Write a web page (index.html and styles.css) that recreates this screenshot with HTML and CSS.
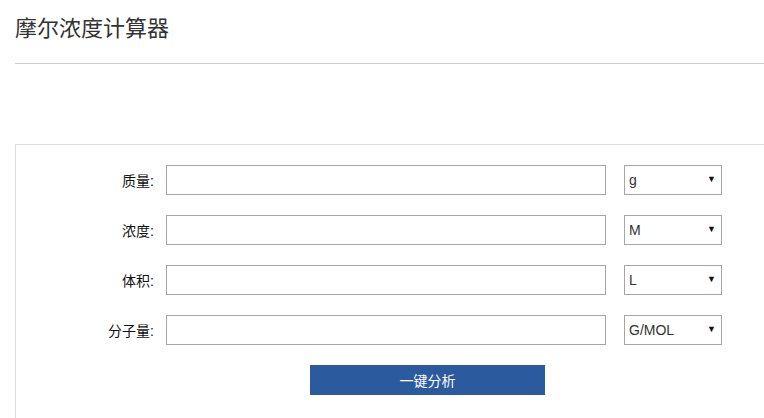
FILE: index.html
```html
<!DOCTYPE html>
<html lang="zh-CN">
<head>
    <meta charset="UTF-8">
    <meta name="viewport" content="width=device-width, initial-scale=1.0">
    <title>摩尔浓度计算器</title>
    <link rel="stylesheet" href="styles.css">
</head>
<body>
    <div class="page">
        <div class="header">
            <h2>摩尔浓度计算器</h2>
        </div>

        <div class="panel">
            <div class="row">
                <label class="label" for="mass">质量:</label>
                <input class="field" id="mass" type="text">
                <div class="unit">
                    <select>
                        <option>g</option>
                        <option>mg</option>
                        <option>kg</option>
                    </select>
                </div>
            </div>
            <div class="row">
                <label class="label" for="conc">浓度:</label>
                <input class="field" id="conc" type="text">
                <div class="unit">
                    <select>
                        <option>M</option>
                        <option>mM</option>
                    </select>
                </div>
            </div>
            <div class="row">
                <label class="label" for="vol">体积:</label>
                <input class="field" id="vol" type="text">
                <div class="unit">
                    <select>
                        <option>L</option>
                        <option>mL</option>
                    </select>
                </div>
            </div>
            <div class="row">
                <label class="label" for="mw">分子量:</label>
                <input class="field" id="mw" type="text">
                <div class="unit">
                    <select>
                        <option>G/MOL</option>
                    </select>
                </div>
            </div>
            <div class="actions">
                <button class="btn" type="button">一键分析</button>
            </div>
        </div>
    </div>
</body>
</html>
```

FILE: styles.css
```css
html, body {
    margin: 0;
}

body {
    font-family: "Liberation Sans", "Noto Sans CJK SC", sans-serif;
    color: #333;
    background-color: #fff;
}

.page {
    padding: 14px 0 0 15px;
}

.header {
    border-bottom: 1px solid #ccc;
    padding-bottom: 19px;
}

.header h2 {
    margin: 0;
    font-size: 22px;
    font-weight: normal;
    line-height: 30px;
    color: #333;
}

/* right edge of the box is cut off by the window */
.panel {
    margin-top: 80px;
    border: 1px solid #ddd;
    border-right: none;
    padding: 20px 0 30px 0;
}

.row {
    display: flex;
    align-items: center;
    height: 30px;
    margin-bottom: 20px;
}

.label {
    width: 138px;
    padding-right: 12px;
    text-align: right;
    font-size: 14px;
    color: #111;
}

.field {
    box-sizing: border-box;
    width: 440px;
    height: 30px;
    margin: 0;
    border: 1px solid #a5a5a5;
    padding: 0 6px;
    font-size: 14px;
    font-family: inherit;
    outline: none;
}

.unit {
    position: relative;
    margin-left: 18px;
}

.unit select {
    box-sizing: border-box;
    width: 98px;
    height: 30px;
    border: 1px solid #a5a5a5;
    border-radius: 0;
    background: #fff;
    padding: 0 4px;
    font-size: 14px;
    font-family: inherit;
    color: #333;
    -webkit-appearance: none;
    appearance: none;
    outline: none;
}

.unit::after {
    content: "▼";
    position: absolute;
    right: 6px;
    top: 9px;
    font-size: 9px;
    color: #111;
    pointer-events: none;
}

.actions {
    padding-left: 294px;
}

.btn {
    width: 235px;
    height: 30px;
    border: none;
    background-color: #2b5a9e;
    color: #fff;
    font-size: 14px;
    font-family: inherit;
    cursor: pointer;
}
```
